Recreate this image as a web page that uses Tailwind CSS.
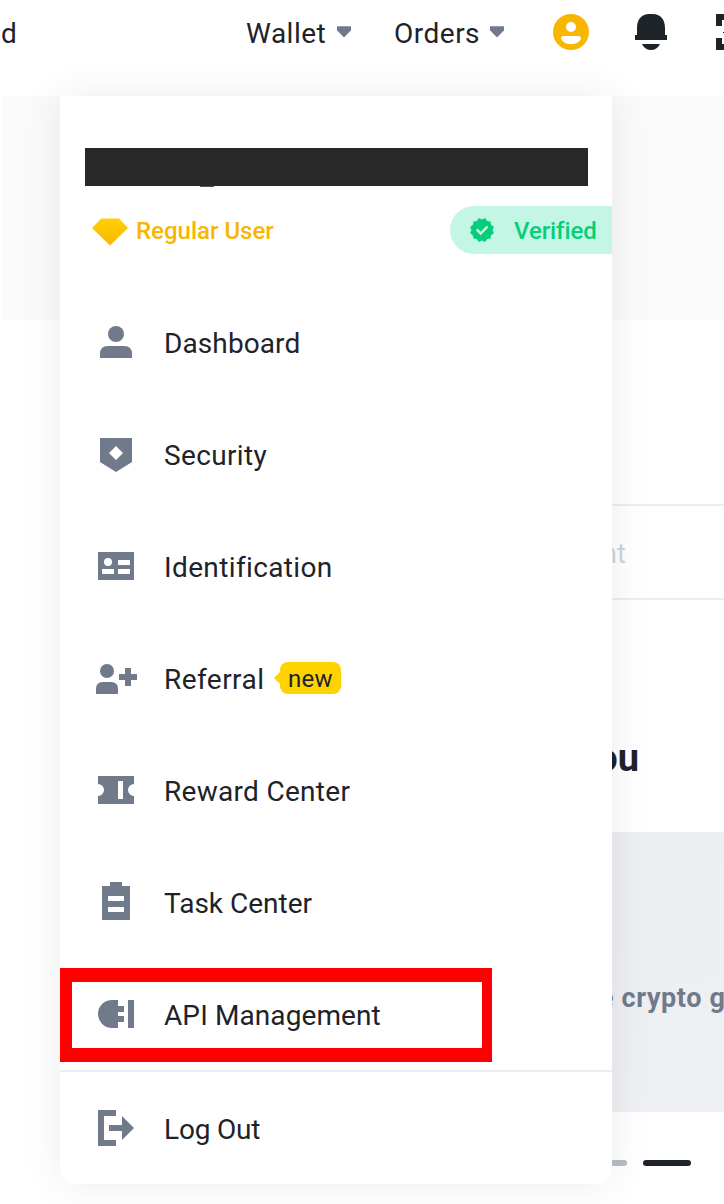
<!DOCTYPE html>
<html lang="en">
<head>
<meta charset="utf-8">
<title>Account menu</title>
<script src="https://cdn.jsdelivr.net/npm/@tailwindcss/browser@4"></script>
</head>
<body class="bg-white">
<div class="relative h-[1204px] w-[724px] overflow-hidden bg-white font-[Roboto,'Liberation_Sans',sans-serif] text-[28px] leading-8 text-[#1e2329]">
  <header class="flex h-24 items-start">
    <span class="mt-[18px] w-[246px] shrink-0"><span class="ml-px">d</span></span>
    <span class="mt-[18px] w-[90px] shrink-0 tracking-[0.5px]">Wallet</span>
    <svg class="mt-[26px] h-3 w-4 shrink-0" viewBox="0 0 16 12" fill="#707a8a"><path d="M1 .3h14v3.900L8.500 11h-1L1 4.200z"/></svg>
    <span class="mt-[18px] ml-[42px] w-[95px] shrink-0 tracking-[0.5px]">Orders</span>
    <svg class="mt-[26px] h-3 w-4 shrink-0" viewBox="0 0 16 12" fill="#707a8a"><path d="M1 .3h14v3.900L8.500 11h-1L1 4.200z"/></svg>
    <svg class="mt-[14px] ml-12 h-9 w-9 shrink-0" viewBox="0 0 36 36"><circle cx="18" cy="18" r="18" fill="#f8b600"/><circle cx="18" cy="13" r="5" fill="#fff"/><path d="M10.500 22h15q2.500 0 2.500 2c-1 4-5 6-10 6s-9-2-10-6q0-2 2.500-2z" fill="#fff"/></svg>
    <svg class="mt-[14px] ml-[46px] h-9 w-8 shrink-0" viewBox="0 0 32 36" fill="#1e2329"><path d="M2 14C2 5 7 0 14 0h4c7 0 12 5 12 14v7h2v5H0v-5h2zM7 30h18c-2 4-5 6-9 6s-7-2-9-6z"/></svg>
    <svg class="mt-[14px] ml-[49px] h-9 w-2 shrink-0" viewBox="0 0 8 36" fill="#1e2329"><path d="M0 0h8v6H6v6H0zM0 24h6v6h2v6H0zM7 18h1v1H7z"/></svg>
  </header>

  <main>
    <div class="ml-0.5 h-56 bg-[#fafafa]"></div>
    <div class="mt-[184px] ml-[200px] flex h-24 items-center border-y-2 border-[#eaecef] pt-1 pl-[402px] text-[27px] text-[#d0d4d9]">nt</div>
    <h2 class="mt-[134px] h-12 pl-[574px] text-[38px] leading-[48px] font-bold">You</h2>
    <div class="mt-[50px] ml-[200px] flex h-[280px] items-center bg-linear-to-br from-[#eeeff2] via-[#edeef2] to-[#eff0f3] pt-[52px] pl-[399px] text-[27px] font-bold tracking-[0.6px] whitespace-nowrap text-[#707a8a]">e crypto g</div>
    <div class="mt-12 flex h-1.5 gap-4 pl-[579px]"><i class="w-12 rounded-sm bg-[#b7bdc6]"></i><i class="w-12 rounded-sm bg-[#1e2329]"></i></div>
  </main>

  <nav class="absolute top-24 left-[60px] h-[1088px] w-[552px] rounded-b-2xl bg-white shadow-[0_0_40px_rgba(0,0,0,0.08)]">
    <div class="flex justify-center pt-[52px] pr-[1px] pl-[2px]">
      <div class="relative h-[38px] w-[503px] bg-[#282828]"><i class="absolute top-[38px] left-[115px] h-px w-3.5 bg-[#55565a]"></i></div>
    </div>
    <div class="mt-5 flex h-12 items-center pl-8">
      <svg class="mt-1 h-7 w-9" viewBox="0 0 36 28"><defs><linearGradient id="gem" x2="0" y2="1"><stop stop-color="#ffd006"/><stop offset="1" stop-color="#f8b500"/></linearGradient></defs><path d="M9 .5h18l9 9.5-18 17.5L0 10z" fill="url(#gem)"/></svg>
      <span class="mt-px ml-2 text-[24px] font-medium text-[#f8b600]">Regular User</span>
      <div class="ml-auto flex h-12 w-[162px] items-center rounded-l-full bg-[#c4f6e5] pl-5 text-[#03cf7a]">
        <svg class="h-6 w-6" viewBox="0 0 24 24"><path fill="currentColor" d="M12 1.500 15.100 0 17.200 2.900 20.500 3.500 21.100 6.800 24 8.900 22.500 12 24 15.100 21.100 17.200 20.500 20.500 17.200 21.100 15.100 24 12 22.500 8.900 24 6.800 21.100 3.500 20.500 2.900 17.200 0 15.100 1.500 12 0 8.900 2.900 6.800 3.500 3.500 6.800 2.900 8.900 0z"/><path d="m6.700 11.500 4 4 6.800-7" fill="none" stroke="#c4f6e5" stroke-width="2.500"/></svg>
        <span class="mt-px ml-5 text-[24px] font-medium tracking-[-0.1px]">Verified</span>
      </div>
    </div>

    <ul class="mt-8">
      <li class="flex h-28 items-center pl-8"><svg class="mr-6 h-12 w-12" viewBox="0 0 48 48" fill="#707a8a"><circle cx="24" cy="16" r="8"/><path d="M8 40v-4q0-8 8-8h16q8 0 8 8v4z"/></svg><span class="mt-1 tracking-[0.1px]">Dashboard</span></li>
      <li class="flex h-28 items-center pl-8"><svg class="mr-6 h-12 w-12" viewBox="0 0 48 48" fill="#707a8a"><path fill-rule="evenodd" d="M8 8h32v24l-16 10L8 32zM24 16l-7 7 7 7 7-7z"/></svg><span class="mt-1 tracking-[0.35px]">Security</span></li>
      <li class="flex h-28 items-center pl-8"><svg class="mr-6 h-12 w-12" viewBox="0 0 48 48"><path fill="#707a8a" d="M6 10h36v28H6z"/><circle cx="16" cy="20" r="4" fill="#fff"/><path fill="#fff" d="M26 18h12v5H26zM10 27h12v5H10zM26 27h12v5H26z"/></svg><span class="mt-1 tracking-[0.37px]">Identification</span></li>
      <li class="flex h-28 items-center pl-8"><svg class="mr-6 h-12 w-12" viewBox="0 0 48 48" fill="#707a8a"><circle cx="15" cy="17" r="7"/><path d="M4 40v-5q0-7 7-7h8q7 0 7 7v5zM33 14h6v6h6v6h-6v6h-6v-6h-6v-6h6z"/></svg><span class="mt-1 w-[110px] tracking-[0.45px]">Referral</span>
        <svg class="h-3 w-1.5" viewBox="0 0 6 12"><path d="M6 0v12L0 6z" fill="#ffd300"/></svg><span class="flex h-8 w-[61px] items-center justify-center rounded-lg bg-[#ffd300] pt-0.5 text-[24px] tracking-[0.3px]">new</span></li>
      <li class="flex h-28 items-center pl-8"><svg class="mr-6 h-12 w-12" viewBox="0 0 48 48" fill="#707a8a"><path fill-rule="evenodd" d="M6 10h36v8a6 6 0 0 0 0 12v8H6v-8a6 6 0 0 0 0-12zM26 15v18h5V15z"/></svg><span class="mt-1 tracking-[0.3px]">Reward Center</span></li>
      <li class="flex h-28 items-center pl-8"><svg class="mr-6 h-12 w-12" viewBox="0 0 48 48" fill="#707a8a"><path fill-rule="evenodd" d="M10 8h8V4h12v4h8v34H10zM16 18v5h16v-5zM16 29v5h16v-5z"/></svg><span class="mt-1">Task Center</span></li>
      <li class="relative flex h-28 items-center pl-8"><svg class="mr-6 h-12 w-12" viewBox="0 0 48 48" fill="#707a8a"><path d="M20 10h6v6h6v6h-6v4h6v6h-6v6h-6a14 14 0 0 1 0-28zM36 10h6v28h-6z"/></svg><span class="mt-1 tracking-[0.1px]">API Management</span>
        <i class="absolute top-2.5 left-0 h-[94px] w-[432px] border-y-14 border-r-10 border-l-12 border-[#ff0000]"></i></li>
      <li class="flex h-[114px] items-center border-t-2 border-[#eaecef] pl-8"><svg class="mr-6 h-12 w-12" viewBox="0 0 48 48" fill="#707a8a"><path d="M6 6h18v6H12v24h12v6H6zM17 21h13v-9l12 12-12 12v-9H17z"/></svg><span class="mt-1 tracking-[-0.2px]">Log Out</span></li>
    </ul>
  </nav>
</div>
</body>
</html>
